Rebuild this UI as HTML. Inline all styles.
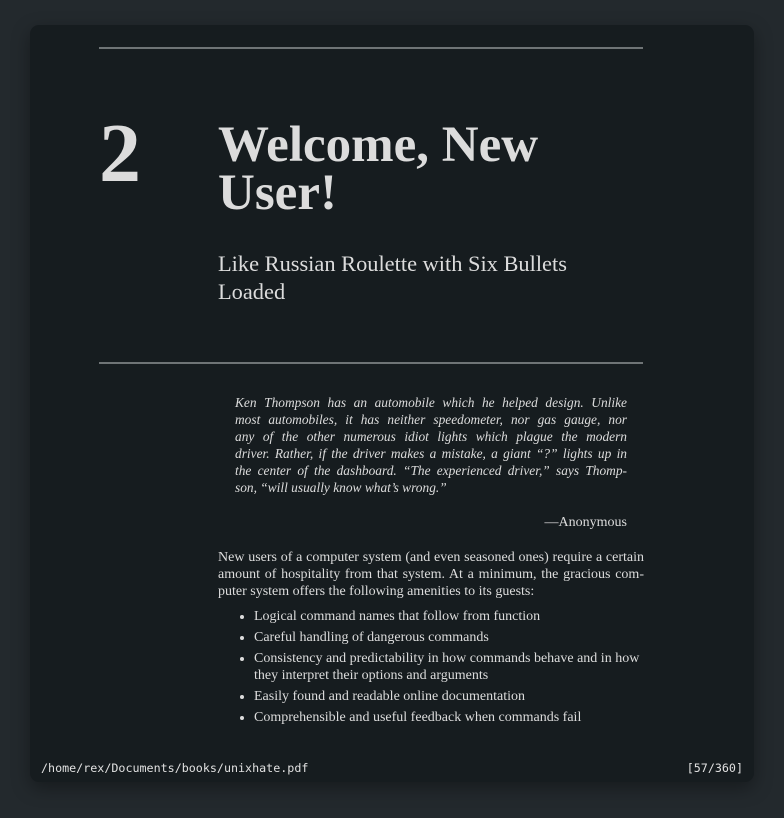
<!DOCTYPE html>
<html><head><style>
body{margin:0;width:784px;height:818px;background:#23292d;font-family:"Liberation Serif",serif;overflow:hidden;position:relative}
.win{position:absolute;left:30px;top:25px;width:724px;height:757px;background:#161c1f;border-radius:9px;box-shadow:0 6px 18px rgba(0,0,0,.35)}
.rule{position:absolute;left:99px;width:544px;height:2px;background:#6f7476}
.t{position:absolute;color:#dcdcdc;margin:0}
.num{left:99px;top:109px;font-size:84px;font-weight:bold;line-height:90px}
.title{left:218px;top:121px;font-size:51px;font-weight:bold;line-height:48px}
.sub{left:218px;top:250px;font-size:22.4px;line-height:28px}
.quote{left:235px;top:394px;width:392px;font-size:13.4px;font-style:italic;line-height:17px}
.l{display:block;text-align:justify;text-align-last:justify;white-space:nowrap}
.quote .last,.body .last{text-align-last:left}
.anon{left:235px;top:515px;width:392px;text-align:right;font-size:14px}
.body{left:218px;top:549px;width:426px;font-size:14px;line-height:17px}
ul{position:absolute;left:218px;top:608px;width:426px;margin:0;padding:0 0 0 36px;box-sizing:border-box;color:#dcdcdc;font-size:14px;line-height:17px}
li{margin-bottom:4px}
.foot{position:absolute;top:761px;font-family:"DejaVu Sans Mono","Liberation Mono",monospace;font-size:11.7px;color:#e0e0e0}
</style></head><body>
<div class="win"></div>
<div class="rule" style="top:47px"></div>
<div class="t num">2</div>
<div class="t title">Welcome, New<br>User!</div>
<div class="t sub">Like Russian Roulette with Six Bullets<br>Loaded</div>
<div class="rule" style="top:362px"></div>
<div class="t quote">
<span class="l">Ken Thompson has an automobile which he helped design. Unlike</span>
<span class="l">most automobiles, it has neither speedometer, nor gas gauge, nor</span>
<span class="l">any of the other numerous idiot lights which plague the modern</span>
<span class="l">driver. Rather, if the driver makes a mistake, a giant “?” lights up in</span>
<span class="l">the center of the dashboard. “The experienced driver,” says Thomp-</span>
<span class="l last">son, “will usually know what’s wrong.”</span>
</div>
<div class="t anon">—Anonymous</div>
<div class="t body">
<span class="l">New users of a computer system (and even seasoned ones) require a certain</span>
<span class="l">amount of hospitality from that system. At a minimum, the gracious com-</span>
<span class="l last">puter system offers the following amenities to its guests:</span>
</div>
<ul>
<li>Logical command names that follow from function</li>
<li>Careful handling of dangerous commands</li>
<li>Consistency and predictability in how commands behave and in how they interpret their options and arguments</li>
<li>Easily found and readable online documentation</li>
<li>Comprehensible and useful feedback when commands fail</li>
</ul>
<div class="foot" style="left:41px">/home/rex/Documents/books/unixhate.pdf</div>
<div class="foot" style="right:41px">[57/360]</div>
</body></html>
